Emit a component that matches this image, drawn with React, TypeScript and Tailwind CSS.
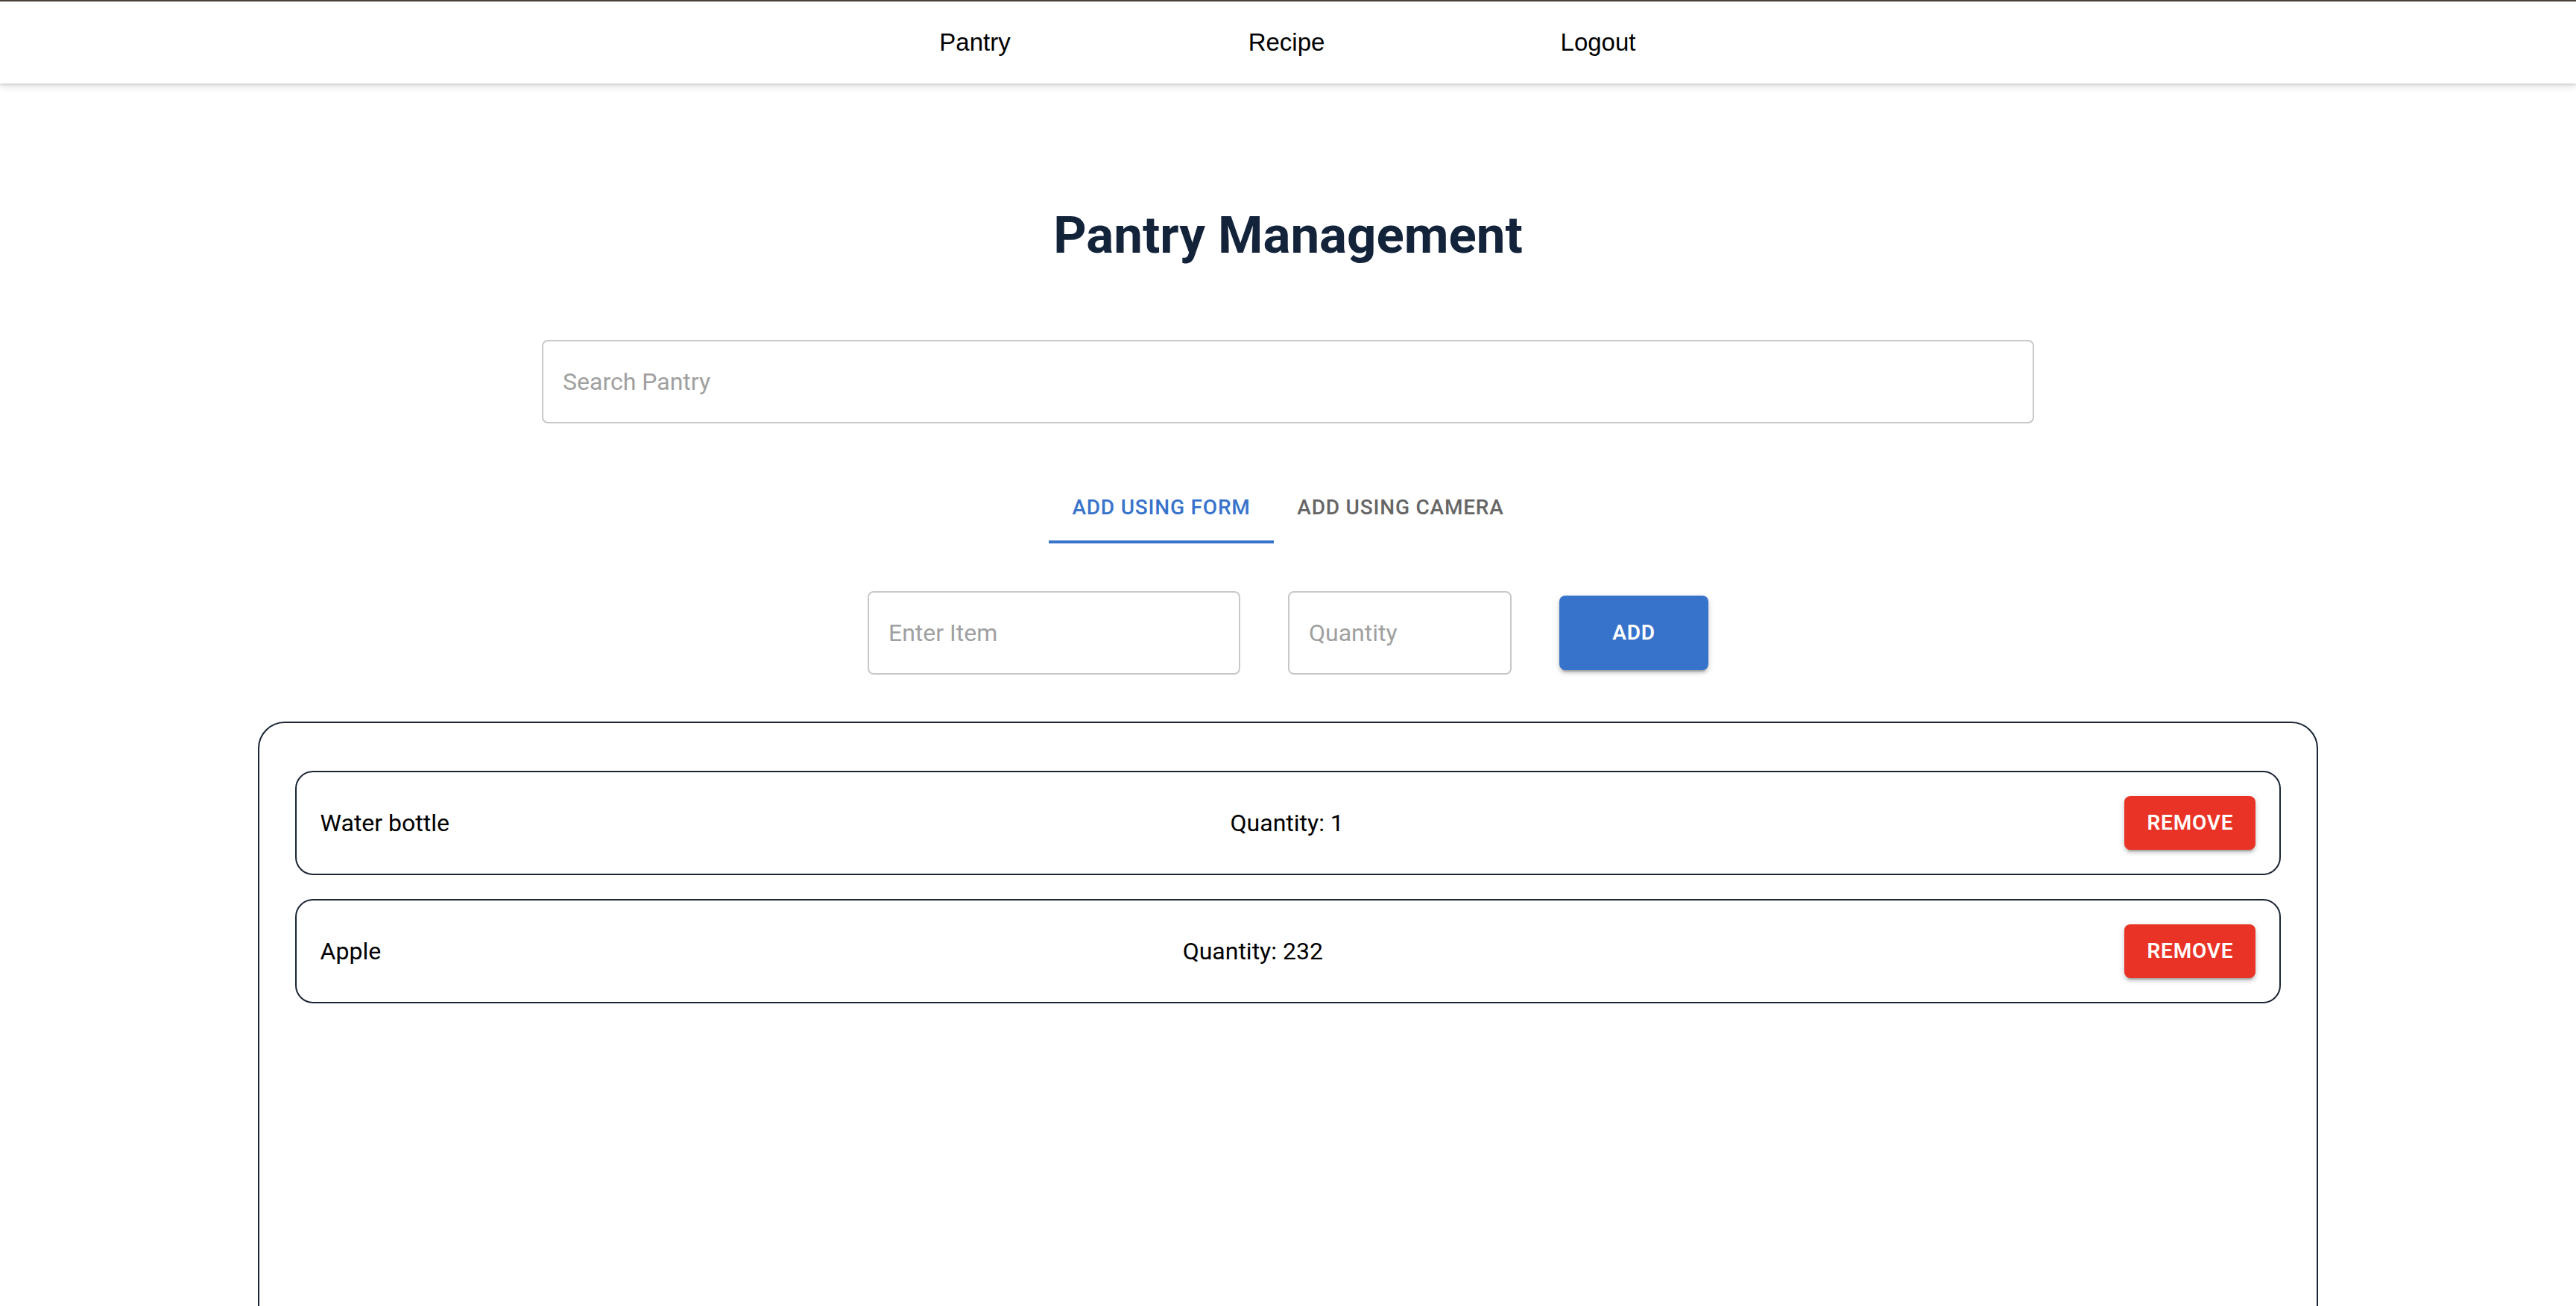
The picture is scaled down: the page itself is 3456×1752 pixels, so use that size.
import React from "react";

const items = [
  { name: "Water bottle", qty: 1 },
  { name: "Apple", qty: 232 },
];

export default function App() {
  return (
    <div className="h-[1752px] overflow-hidden bg-white font-['Roboto',sans-serif]">
      <header className="relative z-10 h-[112px] border-t-[2px] border-[#4a4039] bg-white shadow-[0_4px_10px_rgba(0,0,0,0.12),0_2px_3px_rgba(0,0,0,0.10)]">
        <nav className="flex h-full items-center justify-center pr-[4px] font-['Liberation_Sans',Arial,sans-serif] text-[33px] text-black">
          <div className="w-[418px] text-center">Pantry</div>
          <div className="w-[418px] text-center">Recipe</div>
          <div className="w-[418px] text-center">Logout</div>
        </nav>
      </header>

      <main className="flex flex-col items-center">
        <h1 className="mt-[162px] h-[84px] text-[69px] font-bold leading-[84px] text-[#13233a]">
          Pantry Management
        </h1>

        <div className="mt-[98px] flex h-[112px] w-[2002px] items-center rounded-[8px] border-2 border-[#c8c8c8] px-[26px]">
          <span className="text-[32px] text-[#a0a0a0]">Search Pantry</span>
        </div>

        <div className="mt-[65px] flex h-[96px]">
          <div className="relative flex w-[302px] items-center justify-center text-[28px] font-medium uppercase tracking-[0.8px] text-[#3873cb]">
            Add using form
            <span className="absolute bottom-0 left-0 right-0 h-[4px] bg-[#3873cb]" />
          </div>
          <div className="flex w-[340px] items-center justify-center text-[28px] font-medium uppercase tracking-[0.8px] text-[#666666]">
            Add using camera
          </div>
        </div>

        <div className="mt-[64px] flex items-center gap-[64px]">
          <div className="flex h-[112px] w-[500px] items-center rounded-[8px] border-2 border-[#c8c8c8] px-[26px]">
            <span className="text-[32px] text-[#a0a0a0]">Enter Item</span>
          </div>
          <div className="flex h-[112px] w-[300px] items-center rounded-[8px] border-2 border-[#c8c8c8] px-[26px]">
            <span className="text-[32px] text-[#a0a0a0]">Quantity</span>
          </div>
          <button className="flex h-[100px] w-[200px] items-center justify-center rounded-[8px] bg-[#3873cb] text-[28px] font-semibold uppercase tracking-[0.8px] text-white shadow-[0_6px_2px_-4px_rgba(0,0,0,0.2),0_4px_5px_0_rgba(0,0,0,0.14),0_2px_10px_0_rgba(0,0,0,0.12)]">
            Add
          </button>
        </div>

        <div className="mt-[63px] flex h-[1000px] w-[80%] shrink-0 flex-col gap-[32px] rounded-[36px] border-2 border-[#1b2635] px-[48px] pt-[64px]">
          {items.map((it) => (
            <div
              key={it.name}
              className="flex h-[140px] items-center justify-between rounded-[24px] border-2 border-[#1b2635] px-[32px] text-[32px] text-black"
            >
              <span>{it.name}</span>
              <span>Quantity: {it.qty}</span>
              <button className="flex h-[72px] w-[176px] items-center justify-center rounded-[8px] bg-[#e93326] text-[28px] font-semibold uppercase tracking-[0.8px] text-white shadow-[0_6px_2px_-4px_rgba(0,0,0,0.2),0_4px_5px_0_rgba(0,0,0,0.14),0_2px_10px_0_rgba(0,0,0,0.12)]">
                Remove
              </button>
            </div>
          ))}
        </div>
      </main>
    </div>
  );
}
